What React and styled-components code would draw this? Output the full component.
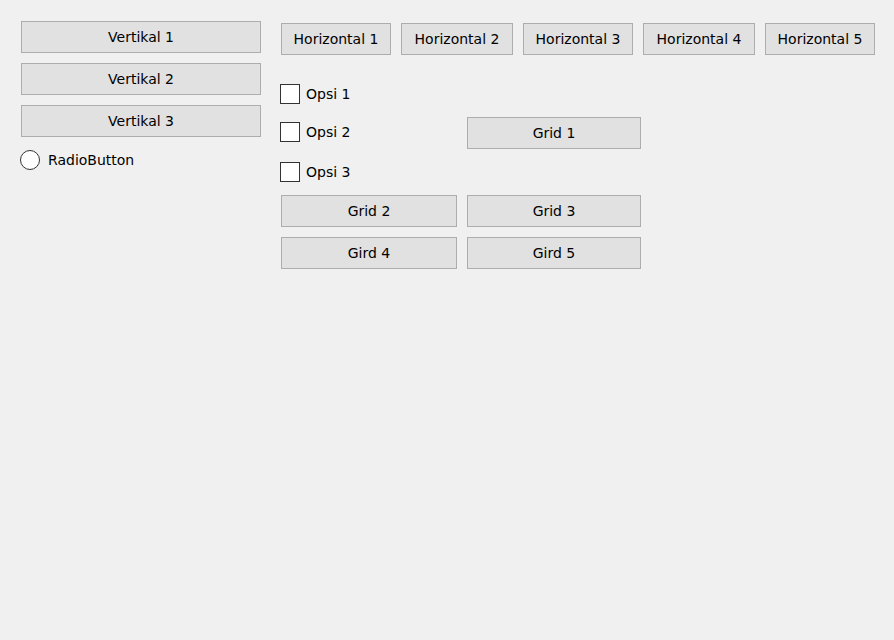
import styled, { createGlobalStyle } from "styled-components";

const GlobalStyle = createGlobalStyle`
  html, body {
    margin: 0;
    background: #f0f0f0;
    font-family: "DejaVu Sans", "Liberation Sans", sans-serif;
    font-size: 14px;
    color: #000;
  }
`;

const Page = styled.div`
  display: flex;
  gap: 20px;
  padding: 21px 0 0 21px;
  min-height: 640px;
  box-sizing: border-box;
`;

const LeftColumn = styled.div`
  display: flex;
  flex-direction: column;
  gap: 10px;
  width: 240px;
`;

const RightColumn = styled.div`
  display: flex;
  flex-direction: column;
  padding-top: 2px;
`;

const Button = styled.button`
  box-sizing: border-box;
  width: ${(p) => p.w || 240}px;
  height: 32px;
  padding: 0;
  background: #e1e1e1;
  border: 1px solid #adadad;
  border-radius: 0;
  font-family: inherit;
  font-size: 14px;
  color: #000;
  display: flex;
  align-items: center;
  justify-content: center;
`;

const RadioRow = styled.label`
  display: flex;
  align-items: center;
  gap: 8px;
  margin: 3px 0 0 -1px;
  height: 20px;
`;

const RadioCircle = styled.span`
  box-sizing: border-box;
  width: 20px;
  height: 20px;
  border-radius: 50%;
  border: 1px solid #333;
  background: #fff;
`;

const HorizontalRow = styled.div`
  display: flex;
  gap: 10px;
`;

const Grid = styled.div`
  display: grid;
  grid-template-columns: 176px 174px;
  column-gap: 10px;
  row-gap: 10px;
  margin-top: 29px;
`;

const CheckGroup = styled.div`
  display: flex;
  flex-direction: column;
  margin-left: -1px;
  padding-bottom: 3px;
`;

const CheckRow = styled.label`
  display: flex;
  align-items: center;
  gap: 6px;
  height: 20px;
  margin-top: ${(p) => p.space || 0}px;
`;

const CheckBox = styled.span`
  box-sizing: border-box;
  width: 20px;
  height: 20px;
  border: 1px solid #333;
  background: #fff;
`;

const GridCell = styled.div`
  align-self: start;
  margin-top: ${(p) => p.offset || 0}px;
`;

const horizontalWidths = [110, 112, 110, 112, 110];
const checkSpacing = [0, 18, 20];

export default function App() {
  return (
    <>
      <GlobalStyle />
      <Page>
        <LeftColumn>
          <Button>Vertikal 1</Button>
          <Button>Vertikal 2</Button>
          <Button>Vertikal 3</Button>
          <RadioRow>
            <RadioCircle />
            RadioButton
          </RadioRow>
        </LeftColumn>
        <RightColumn>
          <HorizontalRow>
            {horizontalWidths.map((w, i) => (
              <Button key={i} w={w}>Horizontal {i + 1}</Button>
            ))}
          </HorizontalRow>
          <Grid>
            <CheckGroup>
              {checkSpacing.map((s, i) => (
                <CheckRow key={i} space={s}>
                  <CheckBox />
                  Opsi {i + 1}
                </CheckRow>
              ))}
            </CheckGroup>
            <GridCell offset={33}>
              <Button w={174}>Grid 1</Button>
            </GridCell>
            <Button w={176}>Grid 2</Button>
            <Button w={174}>Grid 3</Button>
            <Button w={176}>Gird 4</Button>
            <Button w={174}>Gird 5</Button>
          </Grid>
        </RightColumn>
      </Page>
    </>
  );
}
